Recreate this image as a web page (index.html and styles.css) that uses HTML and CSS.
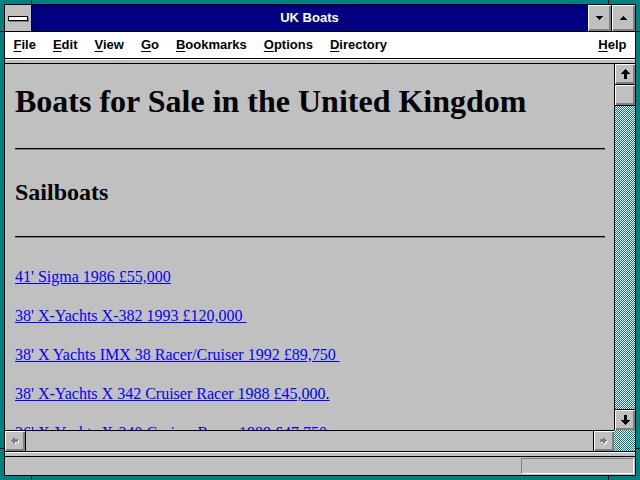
FILE: index.html
```html
<!DOCTYPE html>
<html>
<head>
<meta charset="utf-8">
<title>UK Boats</title>
<link rel="stylesheet" href="styles.css">
</head>
<body>
<svg class="defs" width="0" height="0" aria-hidden="true">
  <defs>
    <pattern id="dither" width="2" height="2" patternUnits="userSpaceOnUse">
      <rect width="2" height="2" fill="#fff"/>
      <rect width="1" height="1" fill="#008080"/>
      <rect x="1" y="1" width="1" height="1" fill="#008080"/>
    </pattern>
  </defs>
</svg>
<div class="win">
  <div class="inner">
    <div class="titlebar">
      <div class="sysmenu"><div class="sysbar"></div></div>
      <div class="title">UK Boats</div>
      <div class="tbtn"><svg width="7" height="4" viewBox="0 0 7 4"><path d="M0 0h7v1H0zM1 1h5v1H1zM2 2h3v1H2zM3 3h1v1H3z" fill="#000"/></svg></div>
      <div class="tbtn"><svg width="7" height="4" viewBox="0 0 7 4"><path d="M3 0h1v1H3zM2 1h3v1H2zM1 2h5v1H1zM0 3h7v1H0z" fill="#000"/></svg></div>
    </div>
    <div class="menubar">
      <span class="mi"><u>F</u>ile</span>
      <span class="mi"><u>E</u>dit</span>
      <span class="mi"><u>V</u>iew</span>
      <span class="mi"><u>G</u>o</span>
      <span class="mi"><u>B</u>ookmarks</span>
      <span class="mi"><u>O</u>ptions</span>
      <span class="mi"><u>D</u>irectory</span>
      <span class="mi help"><u>H</u>elp</span>
    </div>
    <div class="band"></div>
    <div class="main">
      <div class="content">
        <h1 class="h-main">Boats for Sale in the United Kingdom</h1>
        <div class="rule rule1"></div>
        <h2 class="h-sub">Sailboats</h2>
        <div class="rule rule2"></div>
        <div class="item first"><a href="#">41' Sigma 1986 £55,000</a></div>
        <div class="item"><a href="#">38' X-Yachts X-382 1993 £120,000&nbsp;</a></div>
        <div class="item"><a href="#">38' X Yachts IMX 38 Racer/Cruiser 1992 £89,750&nbsp;</a></div>
        <div class="item"><a href="#">38' X-Yachts X 342 Cruiser Racer 1988 £45,000.</a></div>
        <div class="item"><a href="#">36' X-Yachts X-340 Cruiser Racer 1989 £47,750</a></div>
      </div>
      <div class="vscroll">
        <div class="sbtn up"><svg width="9" height="10" viewBox="0 0 9 10"><path d="M4 0h1v1H4zM3 1h3v1H3zM2 2h5v1H2zM1 3h7v1H1zM0 4h9v1H0zM3 5h3v5H3z" fill="#000"/></svg></div>
        <div class="sbtn thumb"></div>
        <div class="trough"><svg class="dfill"><rect width="100%" height="100%" fill="url(#dither)" shape-rendering="crispEdges"/></svg></div>
        <div class="sbtn down"><svg width="9" height="10" viewBox="0 0 9 10"><path d="M3 0h3v5H3zM0 5h9v1H0zM1 6h7v1H1zM2 7h5v1H2zM3 8h3v1H3zM4 9h1v1H4z" fill="#000"/></svg></div>
      </div>
      <div class="hscroll">
        <div class="hbtn left"><svg width="8" height="8" viewBox="0 0 8 8"><path transform="translate(1 1)" d="M0 3h1v1H0zM1 2h1v3H1zM2 1h1v5H2zM3 0h1v7H3zM4 2h3v3H4z" fill="#fff"/><path d="M0 3h1v1H0zM1 2h1v3H1zM2 1h1v5H2zM3 0h1v7H3zM4 2h3v3H4z" fill="#808080"/></svg></div>
        <div class="htrough"></div>
        <div class="hbtn right"><svg width="8" height="8" viewBox="0 0 8 8"><path transform="translate(1 1)" d="M6 3h1v1H6zM5 2h1v3H5zM4 1h1v5H4zM3 0h1v7H3zM0 2h3v3H0z" fill="#fff"/><path d="M6 3h1v1H6zM5 2h1v3H5zM4 1h1v5H4zM3 0h1v7H3zM0 2h3v3H0z" fill="#808080"/></svg></div>
      </div>
      <div class="corner"><svg class="dfill"><rect width="100%" height="100%" fill="url(#dither)" shape-rendering="crispEdges"/></svg></div>
    </div>
    <div class="band band2"></div>
    <div class="status"><div class="sbox"></div></div>
  </div>
  <i class="notch nt1"></i><i class="notch nt2"></i>
  <i class="notch nb1"></i><i class="notch nb2"></i>
  <i class="notch nl1"></i><i class="notch nl2"></i>
  <i class="notch nr1"></i><i class="notch nr2"></i>
</div>
</body>
</html>
```

FILE: styles.css
```css
* { box-sizing: border-box; }
html, body { margin: 0; padding: 0; background: #008080; }
body { font-family: "Liberation Sans", Arial, sans-serif; }
.defs { position: absolute; width: 0; height: 0; overflow: hidden; }

.win {
  position: relative;
  width: 640px;
  height: 480px;
  padding: 4px;
  background: #008080;
}
.inner {
  height: 100%;
  border: 1px solid #000;
  background: #c0c0c0;
  display: flex;
  flex-direction: column;
}

/* title bar */
.titlebar {
  height: 27px;
  flex: none;
  display: flex;
  background: #000080;
  border-bottom: 1px solid #000;
}
.sysmenu {
  width: 27px;
  border-right: 1px solid #000;
  background: #c0c0c0;
  display: flex;
  align-items: center;
  justify-content: center;
}
.sysbar {
  width: 20px;
  height: 5px;
  background: #fff;
  border: 1px solid #000;
  box-shadow: 1px 1px 0 #808080;
  margin-left: -1px;
}
.title {
  flex: 1;
  color: #fff;
  font-weight: bold;
  font-size: 13px;
  line-height: 26px;
  text-align: center;
}
.tbtn {
  width: 24px;
  border-left: 1px solid #000;
  background: #c0c0c0;
  box-shadow: inset 1px 1px #fff, inset -1px -1px #808080, inset -2px -2px #808080;
  display: flex;
  align-items: center;
  justify-content: center;
}
.tbtn svg { display: block; }

/* menu bar */
.menubar {
  height: 27px;
  flex: none;
  display: flex;
  background: #fff;
  border-bottom: 1px solid #000;
  font-size: 13px;
  font-weight: bold;
  line-height: 26px;
  color: #000;
}
.mi { padding: 0 8.5px; white-space: nowrap; }
.mi u { text-decoration: underline; text-underline-offset: 2px; }
.help { margin-left: auto; }

/* separator bands */
.band {
  height: 5px;
  flex: none;
  background: #c0c0c0;
  border-bottom: 1px solid #000;
  box-shadow: inset 0 1px #fff;
}
.band2 {
  height: 6px;
  border-top: 1px solid #000;
}

/* main viewing area */
.main {
  height: 387px;
  flex: none;
  display: grid;
  grid-template-columns: 609px 21px;
  grid-template-rows: 366px 21px;
}
.content {
  overflow: hidden;
  padding: 0 8px 0 10px;
  background: #c0c0c0;
  font-family: "Liberation Serif", "Times New Roman", serif;
  color: #000;
}
.h-main {
  margin: 19px 0 0;
  font-size: 32px;
  line-height: 36px;
  font-weight: bold;
  white-space: nowrap;
}
.h-sub {
  margin: 28px 0 0;
  font-size: 24px;
  line-height: 28px;
  font-weight: bold;
}
.rule {
  height: 2px;
  border-top: 1px solid #000;
  border-bottom: 1px solid #808080;
  margin-right: 1px;
}
.rule1 { margin-top: 29px; }
.rule2 { margin-top: 30px; }
.item {
  font-size: 16px;
  line-height: 18px;
  margin-top: 21px;
  white-space: nowrap;
}
.item.first { margin-top: 30px; }
.item a { color: #0000ff; text-decoration: underline; }

/* scrollbars */
.dfill { display: block; width: 100%; height: 100%; }
.trough, .corner { background: #fff; overflow: hidden; }
.vscroll {
  border-left: 1px solid #000;
  display: flex;
  flex-direction: column;
}
.sbtn {
  height: 21px;
  flex: none;
  background: #c0c0c0;
  box-shadow: inset 1px 1px #fff, inset -1px -1px #808080, inset -2px -2px #808080;
  display: flex;
  align-items: center;
  justify-content: center;
}
.sbtn svg { display: block; }
.up, .thumb { border-bottom: 1px solid #000; }
.down { border-top: 1px solid #000; }
.trough { flex: 1; }

.hscroll {
  border-top: 1px solid #000;
  display: flex;
  background: #c0c0c0;
}
.hbtn {
  flex: none;
  background: #c0c0c0;
  box-shadow: inset 1px 1px #fff, inset -1px -1px #808080, inset -2px -2px #808080;
  display: flex;
  align-items: center;
  justify-content: center;
}
.hbtn svg { display: block; }
.hbtn.left { width: 21px; border-right: 1px solid #000; }
.hbtn.right { width: 21px; border-left: 1px solid #000; }
.htrough { flex: 1; }

/* status bar */
.status {
  height: 18px;
  flex: none;
  display: flex;
  justify-content: flex-end;
  padding: 1px 1px 1px 0;
  background: #c0c0c0;
}
.sbox {
  width: 113px;
  height: 16px;
  border-top: 1px solid #808080;
  border-left: 1px solid #808080;
  border-bottom: 1px solid #fff;
  border-right: 1px solid #fff;
}

/* window frame resize notches */
.notch { position: absolute; background: #000; display: block; }
.nt1, .nt2 { top: 0; width: 1px; height: 4px; }
.nb1, .nb2 { bottom: 0; width: 1px; height: 4px; }
.nt1, .nb1 { left: 31px; }
.nt2, .nb2 { left: 608px; }
.nl1, .nl2 { left: 0; width: 4px; height: 1px; }
.nr1, .nr2 { right: 0; width: 4px; height: 1px; }
.nl1, .nr1 { top: 31px; }
.nl2, .nr2 { top: 448px; }
```
